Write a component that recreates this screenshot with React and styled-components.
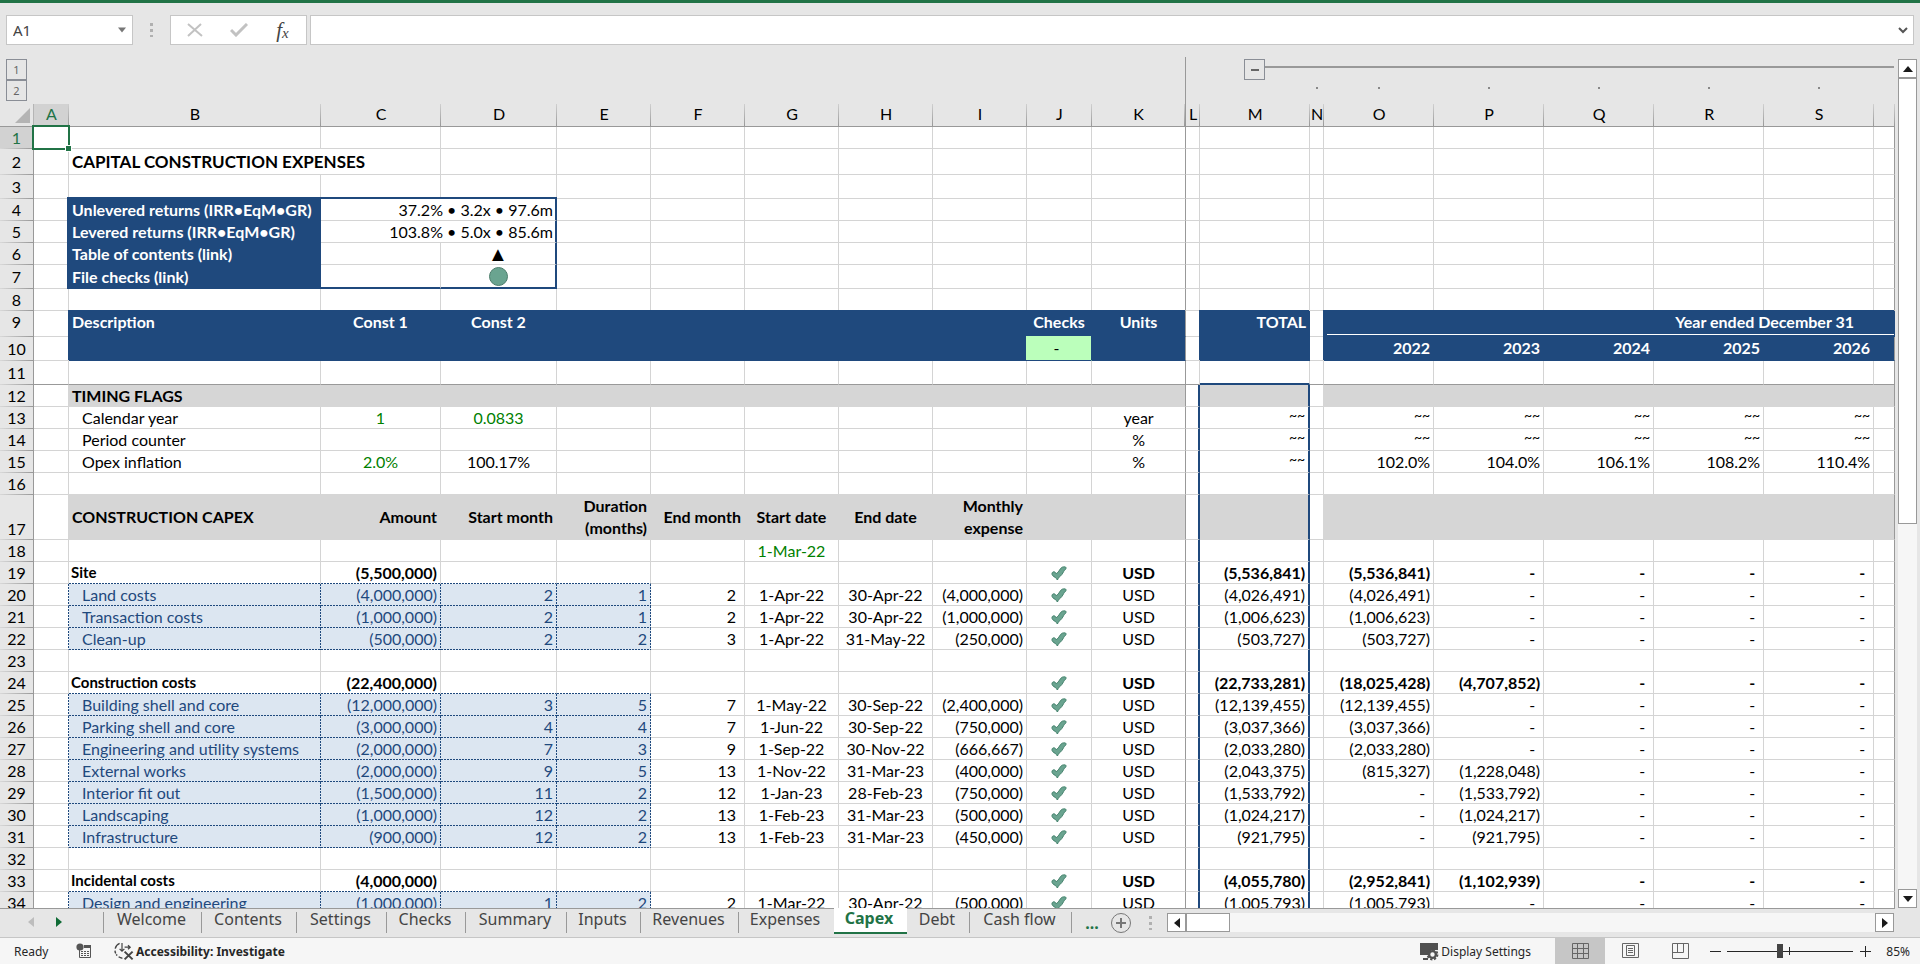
import { useState } from "react";
import { createGlobalStyle, css, styled } from "styled-components";

const NAVY = "#1f497d";
const GREEN = "#217346";
const GRID = "#d4d4d4";
const EDGE = "#999999";
const CHROME = "#e6e6e6";
const BAND = "#d6d6d6";
const UI_FONT = '"Noto Sans", "Open Sans", sans-serif';
const SHEET_FONT = 'Lato, "Open Sans", sans-serif';

const GlobalStyle = createGlobalStyle`
  *, *::before, *::after { box-sizing: border-box; }
  body { margin: 0; background: #ffffff; font-family: ${SHEET_FONT}; font-size: 16px; color: #000000; }
  button, input { font: inherit; color: inherit; margin: 0; }
  button { padding: 0; border: 0; background: none; cursor: pointer; }
  a { color: inherit; text-decoration: none; }
`;

/* ---------- data ---------- */

const COLUMNS = [
  { id: "A", width: 35 },
  { id: "B", width: 252 },
  { id: "C", width: 120 },
  { id: "D", width: 116 },
  { id: "E", width: 94 },
  { id: "F", width: 94 },
  { id: "G", width: 94 },
  { id: "H", width: 94 },
  { id: "I", width: 94 },
  { id: "J", width: 65 },
  { id: "K", width: 94 },
  { id: "L", width: 14 },
  { id: "M", width: 110 },
  { id: "N", width: 14 },
  { id: "O", width: 110 },
  { id: "P", width: 110 },
  { id: "Q", width: 110 },
  { id: "R", width: 110 },
  { id: "S", width: 110 },
  { id: "T" },
];

const YEARS = ["O", "P", "Q", "R", "S"];
const CENTERED = ["G", "H", "J", "K"];

const years = (values) => Object.fromEntries(YEARS.map((col, i) => [col, values[i] ?? "-"]));

const item = (n, name, amount, start, duration, endMonth, startDate, endDate, monthly, total, ...byYear) => ({
  n,
  kind: "item",
  cells: {
    B: name,
    C: amount,
    D: start,
    E: duration,
    F: endMonth,
    G: startDate,
    H: endDate,
    I: monthly,
    J: "tick",
    K: "USD",
    M: total,
    ...years(byYear),
  },
});

const group = (n, name, amount, total, ...byYear) => ({
  n,
  kind: "group",
  cells: { B: name, C: amount, J: "tick", K: "USD", M: total, ...years(byYear) },
});

const WAVES = ["~~", "~~", "~~", "~~", "~~"];

const ROWS = [
  { n: 1 },
  { n: 2, height: 26, cells: { B: "CAPITAL CONSTRUCTION EXPENSES" } },
  { n: 3, height: 24 },
  { n: 4, kind: "summary", cells: { B: "Unlevered returns (IRR•EqM•GR)", C: "37.2% • 3.2x • 97.6m" } },
  { n: 5, kind: "summary", cells: { B: "Levered returns (IRR•EqM•GR)", C: "103.8% • 5.0x • 85.6m" } },
  { n: 6, kind: "summary", cells: { B: "Table of contents (link)", D: "contents" } },
  { n: 7, height: 24, kind: "summary", cells: { B: "File checks (link)", D: "status" } },
  { n: 8 },
  {
    n: 9,
    height: 26,
    kind: "header",
    cells: { B: "Description", C: "Const 1", D: "Const 2", J: "Checks", K: "Units", M: "TOTAL" },
  },
  { n: 10, height: 24, kind: "header", cells: { J: "-", ...years(["2022", "2023", "2024", "2025", "2026"]) } },
  { n: 11, height: 24 },
  { n: 12, kind: "band", cells: { B: "TIMING FLAGS" } },
  { n: 13, cells: { B: "Calendar year", C: "1", D: "0.0833", K: "year", M: "~~", ...years(WAVES) } },
  { n: 14, cells: { B: "Period counter", K: "%", M: "~~", ...years(WAVES) } },
  {
    n: 15,
    cells: {
      B: "Opex inflation",
      C: "2.0%",
      D: "100.17%",
      K: "%",
      M: "~~",
      ...years(["102.0%", "104.0%", "106.1%", "108.2%", "110.4%"]),
    },
  },
  { n: 16 },
  {
    n: 17,
    height: 45,
    kind: "band",
    cells: {
      B: "CONSTRUCTION CAPEX",
      C: "Amount",
      D: "Start month",
      E: "Duration (months)",
      F: "End month",
      G: "Start date",
      H: "End date",
      I: "Monthly expense",
    },
  },
  { n: 18, cells: { G: "1-Mar-22" } },
  group(19, "Site", "(5,500,000)", "(5,536,841)", "(5,536,841)"),
  item(20, "Land costs", "(4,000,000)", 2, 1, 2, "1-Apr-22", "30-Apr-22", "(4,000,000)", "(4,026,491)", "(4,026,491)"),
  item(21, "Transaction costs", "(1,000,000)", 2, 1, 2, "1-Apr-22", "30-Apr-22", "(1,000,000)", "(1,006,623)", "(1,006,623)"),
  item(22, "Clean-up", "(500,000)", 2, 2, 3, "1-Apr-22", "31-May-22", "(250,000)", "(503,727)", "(503,727)"),
  { n: 23 },
  group(24, "Construction costs", "(22,400,000)", "(22,733,281)", "(18,025,428)", "(4,707,852)"),
  item(25, "Building shell and core", "(12,000,000)", 3, 5, 7, "1-May-22", "30-Sep-22", "(2,400,000)", "(12,139,455)", "(12,139,455)"),
  item(26, "Parking shell and core", "(3,000,000)", 4, 4, 7, "1-Jun-22", "30-Sep-22", "(750,000)", "(3,037,366)", "(3,037,366)"),
  item(27, "Engineering and utility systems", "(2,000,000)", 7, 3, 9, "1-Sep-22", "30-Nov-22", "(666,667)", "(2,033,280)", "(2,033,280)"),
  item(28, "External works", "(2,000,000)", 9, 5, 13, "1-Nov-22", "31-Mar-23", "(400,000)", "(2,043,375)", "(815,327)", "(1,228,048)"),
  item(29, "Interior fit out", "(1,500,000)", 11, 2, 12, "1-Jan-23", "28-Feb-23", "(750,000)", "(1,533,792)", "-", "(1,533,792)"),
  item(30, "Landscaping", "(1,000,000)", 12, 2, 13, "1-Feb-23", "31-Mar-23", "(500,000)", "(1,024,217)", "-", "(1,024,217)"),
  item(31, "Infrastructure", "(900,000)", 12, 2, 13, "1-Feb-23", "31-Mar-23", "(450,000)", "(921,795)", "-", "(921,795)"),
  { n: 32 },
  group(33, "Incidental costs", "(4,000,000)", "(4,055,780)", "(2,952,841)", "(1,102,939)"),
  item(34, "Design and engineering", "(1,000,000)", 1, 2, 2, "1-Mar-22", "30-Apr-22", "(500,000)", "(1,005,793)", "(1,005,793)"),
];

const TABS = [
  { name: "Welcome", width: 98 },
  { name: "Contents", width: 95 },
  { name: "Settings", width: 90 },
  { name: "Checks", width: 79 },
  { name: "Summary", width: 101 },
  { name: "Inputs", width: 74 },
  { name: "Revenues", width: 98 },
  { name: "Expenses", width: 95 },
  { name: "Capex", width: 73 },
  { name: "Debt", width: 63 },
  { name: "Cash flow", width: 102 },
];

/* ---------- shell ---------- */

const Window = styled.div`
  display: flex;
  flex-direction: column;
  height: 100vh;
  padding-bottom: 2px;
  border-top: 3px solid ${GREEN};
  overflow: hidden;
`;

const FormulaBar = styled.div`
  display: flex;
  flex: none;
  padding: 12px 6px 12px 6px;
  background: ${CHROME};
`;

const NameBox = styled.div`
  display: flex;
  width: 127px;
  height: 30px;
  border: 1px solid #c6c6c6;
  background: #ffffff;
  font-family: ${UI_FONT};
  font-size: 15px;
  color: #444444;
`;

const NameInput = styled.input`
  flex: 1;
  min-width: 0;
  padding: 0 6px;
  border: 0;
  background: none;
  outline: 0;
`;

const DropButton = styled.button`
  display: grid;
  place-items: center;
  width: 20px;
`;

const Grip = styled.span`
  align-self: center;
  width: 3px;
  height: 14px;
  margin: ${(p) => p.$margin};
  background: repeating-linear-gradient(#b0b0b0 0 3px, transparent 3px 6px);
`;

const FormulaActions = styled.div`
  display: flex;
  align-items: center;
  justify-content: center;
  gap: 4px;
  width: 137px;
  height: 30px;
  margin-right: 3px;
  border: 1px solid #c6c6c6;
  background: #ffffff;
`;

const ActionButton = styled.button`
  display: grid;
  place-items: center;
  width: 40px;
  height: 26px;
`;

const FxLabel = styled.span`
  font: italic 400 21px/22px "Liberation Serif", serif;
  color: #444444;

  sub {
    font-size: 15px;
    line-height: 1;
    vertical-align: -1px;
  }
`;

const FormulaField = styled.div`
  display: flex;
  flex: 1;
  height: 30px;
  border: 1px solid #c6c6c6;
  background: #ffffff;
`;

const Workspace = styled.div`
  display: grid;
  grid-template-columns: minmax(0, 1fr) 25px;
  flex: 1;
  min-height: 0;
  background: ${CHROME};
`;

const SheetView = styled.div`
  overflow: hidden;
  border-bottom: 1px solid ${EDGE};
`;

/* ---------- sheet ---------- */

const Sheet = styled.table`
  width: 100%;
  table-layout: fixed;
  border-collapse: separate;
  border-spacing: 0;
  line-height: 21px;

  th, td {
    padding: 0;
    font-weight: 400;
  }
`;

const Row = styled.tr`
  height: ${(p) => p.$height}px;
`;

const OutlineCell = styled.td`
  vertical-align: top;
  text-align: center;
  line-height: 0;
  border-right: 1px solid ${(p) => (p.$frozen ? EDGE : "transparent")};
`;

const LevelButtons = styled.div`
  display: flex;
  flex-direction: column;
  padding: 2px 0 0 6px;
`;

const OutlineButton = styled.button`
  display: block;
  flex: none;
  width: 21px;
  height: 21px;
  border: 1px solid #8a8e96;
  font-family: ${UI_FONT};
  font-size: 11px;
  line-height: 19px;
  color: #666666;
`;

const GroupSpan = styled.div`
  display: flex;
  align-items: flex-start;
  padding: 2px 0 0 44px;
`;

const GroupLine = styled.span`
  flex: 1;
  height: 2px;
  margin-top: 7px;
  background: ${EDGE};
`;

const Dot = styled.span`
  display: inline-block;
  width: 2px;
  height: 2px;
  margin-top: 6px;
  background: #888888;
`;

const CornerHead = styled.th`
  border-right: 1px solid #b5b5b5;
  border-bottom: 1px solid ${EDGE};
  vertical-align: bottom;
  line-height: 0;

  svg {
    display: block;
    margin: 0 3px 3px auto;
  }
`;

const ColumnHead = styled.th`
  border-bottom: 1px solid ${(p) => (p.$active ? GREEN : EDGE)};
  background: linear-gradient(#d0d0d0, #999999) right / 1px 100% no-repeat ${(p) => (p.$active ? "#d2d2d2" : CHROME)};
  color: ${(p) => (p.$active ? GREEN : "#000000")};
  line-height: 20px;
  vertical-align: top;
  white-space: nowrap;
  ${(p) => p.$frozen && css`border-right: 1px solid ${EDGE};`}
`;

const RowHead = styled.th`
  border-right: 1px solid ${(p) => (p.$active ? GREEN : EDGE)};
  background: linear-gradient(90deg, #d8d8d8, #999999) bottom / 100% 1px no-repeat
    ${(p) => (p.$active ? "#d2d2d2" : CHROME)};
  color: ${(p) => (p.$active ? GREEN : "#000000")};
  vertical-align: ${(p) => p.$valign};

  && {
    padding-bottom: 1px;
  }
`;

const fill = (color) => css`
  background: ${color};
  border-color: ${color};
  box-shadow: -1px -1px 0 ${color};
`;

const inputLines = css`
  border-color: transparent;
  background:
    repeating-linear-gradient(90deg, ${NAVY} 0 2px, transparent 2px 3px) left bottom / 100% 1px no-repeat border-box,
    repeating-linear-gradient(${NAVY} 0 2px, transparent 2px 3px) right top / 1px 100% no-repeat border-box,
    #dce6f1;
  color: ${NAVY};
`;

const Cell = styled.td`
  position: relative;
  border-right: 1px solid ${GRID};
  border-bottom: 1px solid ${GRID};
  background: #ffffff;
  white-space: nowrap;
  vertical-align: ${(p) => p.$valign || "middle"};
  text-align: ${(p) => p.$align || "right"};

  && {
    padding: 0 ${(p) => p.$padRight ?? 3}px 0 ${(p) => p.$padLeft ?? 3}px;
    font-weight: ${(p) => (p.$bold ? 700 : 400)};
  }

  ${(p) => p.$color && css`color: ${p.$color};`}
  ${(p) => p.$size && css`font-size: ${p.$size}px;`}
  ${(p) => p.$wrap && css`white-space: normal; line-height: 22px;`}
  ${(p) => p.$fill && fill(p.$fill)}
  ${(p) => p.$input && inputLines}
  ${(p) => p.$extra}
`;

const Selection = styled.span`
  position: absolute;
  z-index: 2;
  inset: -2px;
  border: 2px solid ${GREEN};

  &::after {
    content: "";
    position: absolute;
    right: -4px;
    bottom: -4px;
    width: 7px;
    height: 7px;
    border: 1px solid #ffffff;
    background: ${GREEN};
  }
`;

const Wave = styled.span`
  display: block;
  height: 21px;
  font-size: 14px;
  line-height: 15px;
`;

const YearTitle = styled.div`
  height: 24px;
  padding-right: 40px;
  border-bottom: 1px solid #ffffff;
`;

const ContentsLink = styled.a`
  display: block;
  font-size: 20px;
  line-height: 19px;
`;

const StatusLink = styled.a`
  display: block;
  width: 19px;
  height: 19px;
  margin: 0 auto;
  border: 1px solid #4c7d6b;
  border-radius: 50%;
  background: #6aa490;
`;

const TickSvg = styled.svg`
  display: block;
  margin: 1px auto 0;
`;

/* ---------- scrollbars ---------- */

const VerticalScroll = styled.div`
  display: flex;
  flex-direction: column;
  margin: 2px 3px 1px 3px;
  background: #f6f6f6;
`;

const ScrollButton = styled.button`
  display: grid;
  place-items: center;
  flex: none;
  width: 19px;
  height: 19px;
  border: 1px solid ${EDGE};
  background: #ffffff;
`;

const Track = styled.div`
  display: flex;
  flex: 1;
`;

const VerticalThumb = styled.div`
  width: 100%;
  height: 55%;
  border: 1px solid ${EDGE};
  background: #ffffff;
`;

const HorizontalScroll = styled.div`
  display: flex;
  flex: 1;
  height: 19px;
  margin: 4px 26px 0 0;
  background: #f6f6f6;
`;

const HorizontalThumb = styled.div`
  width: 44px;
  border: 1px solid ${EDGE};
  background: #ffffff;
`;

/* ---------- tabs and status ---------- */

const separator = css`
  background: linear-gradient(${EDGE}, ${EDGE}) right 3px / 1px 21px no-repeat;
`;

const TabBar = styled.div`
  display: flex;
  flex: none;
  height: 28px;
  background: ${CHROME};
  font-family: ${UI_FONT};
`;

const TabNav = styled.div`
  display: flex;
  width: 104px;
  padding: 5px 0 0 24px;
  ${separator}
`;

const NavButton = styled.button`
  display: grid;
  place-items: center;
  width: 14px;
  height: 16px;
  margin-right: 14px;
`;

const TabButton = styled.button`
  width: ${(p) => p.$width}px;
  height: 24px;
  padding: 0 3px 4px 0;
  line-height: 20px;
  color: #444444;
  ${(p) => !p.$plain && separator}
  ${(p) => p.$active && css`
    z-index: 1;
    height: 26px;
    margin-top: -1px;
    border-bottom: 2px solid ${GREEN};
    background: #ffffff;
    font-weight: 700;
    color: ${GREEN};
  `}
`;

const TabTools = styled.div`
  display: flex;
  align-items: center;
  height: 27px;
  padding-left: 12px;
`;

const MoreButton = styled.button`
  width: 16px;
  margin-right: 10px;
  font-weight: 700;
  line-height: 20px;
  color: ${GREEN};
`;

const RoundButton = styled.button`
  display: grid;
  place-items: center;
  width: 22px;
  height: 22px;
`;

const StatusBar = styled.footer`
  display: flex;
  align-items: stretch;
  flex: none;
  height: 27px;
  border-top: 1px solid #c6c6c6;
  background: #f6f6f6;
  font-family: ${UI_FONT};
  font-size: 12px;
  line-height: 27px;
  color: #262626;
`;

const Ready = styled.span`
  width: 76px;
  padding-left: 14px;
`;

const StatusButton = styled.button`
  display: flex;
  align-items: center;
  gap: 2px;
  margin: ${(p) => p.$margin || "0"};
  font-weight: ${(p) => (p.$bold ? 700 : 400)};
`;

const ViewButton = styled.button`
  display: grid;
  place-items: center;
  width: 50px;
  background: ${(p) => (p.$active ? "#c6c6c6" : "none")};
`;

const ZoomStep = styled.button`
  display: grid;
  place-items: center;
  width: 20px;
`;

const ZoomRange = styled.input`
  appearance: none;
  align-self: center;
  width: 126px;
  height: 16px;
  margin: 0 2px;
  background:
    linear-gradient(#262626, #262626) 62px 4px / 1px 8px no-repeat,
    linear-gradient(#262626, #262626) center / 100% 1px no-repeat;

  &::-webkit-slider-thumb {
    appearance: none;
    width: 6px;
    height: 14px;
    background: #444444;
  }
`;

const ZoomValue = styled.output`
  width: 45px;
  padding-right: 10px;
  text-align: right;
`;

/* ---------- icons ---------- */

const ARROWS = {
  up: "M5 2 L10 8 H0 Z",
  down: "M0 2 H10 L5 8 Z",
  left: "M8 0 V10 L2 5 Z",
  right: "M2 0 V10 L8 5 Z",
};

const Arrow = ({ dir, size = 10, color = "#1a1a1a" }) => (
  <svg width={size} height={size} viewBox="0 0 10 10" aria-hidden="true">
    <path d={ARROWS[dir]} fill={color} />
  </svg>
);

const Tick = () => (
  <TickSvg width="16" height="15" viewBox="0 0 16 15" role="img" aria-label="OK">
    <path
      d="M1 7.2 C1.6 5.4 4 5.2 5.2 7.6 C6.4 7 7.6 5.6 8.6 4 C9.6 2.4 10.6 1 12.4 0.9 C14.2 0.6 15.4 1.2 15 2.4 C14.6 3.8 13.4 4 12.6 5.6 C11.6 7.6 10.4 9.6 8.2 11 C7.4 11.6 7.2 13 6.4 14 C5.6 13 5.4 12 4.2 11.4 C2.4 10.4 0.6 9.2 1 7.2 Z"
      fill="#6aa490"
      stroke="#41806a"
      strokeWidth="1"
    />
  </TickSvg>
);

const MacroIcon = () => (
  <svg width="16" height="16" viewBox="0 0 16 16" aria-hidden="true">
    <path d="M3.5 6 V14.5 H14.5 V2.5 H8" fill="none" stroke="#555555" />
    <path d="M8 2 H15 V5 H8 Z" fill="#555555" />
    <circle cx="4" cy="4" r="3.6" fill="#555555" />
    <path d="M5 8.5 H13 M5 10.5 H13 M5 12.5 H13" stroke="#555555" strokeDasharray="2 1" />
  </svg>
);

const AccessibilityIcon = () => (
  <svg width="20" height="20" viewBox="0 0 20 20" fill="none" stroke="#444444" aria-hidden="true">
    <path d="M5.6 2.4 A7.6 7.6 0 0 0 1.2 7.6" strokeWidth="1.4" />
    <path d="M1 9.6 A7.6 7.6 0 0 0 3.2 14.6" strokeWidth="1.4" strokeDasharray="3 1" />
    <path d="M4.6 15.8 A7.6 7.6 0 0 0 8.4 17.2" strokeWidth="1.4" />
    <path d="M8 2 V10 M5.6 7.8 L8 10.2 L10.4 7.8" strokeWidth="1.2" />
    <path d="M10.6 6.2 H16 M14 4.2 L16.2 6.2 L14 8.2" strokeWidth="1.2" />
    <path d="M10.6 10.6 L18.6 18.4 M18.6 10.6 L10.6 18.4" strokeWidth="2" />
  </svg>
);

const DisplayIcon = () => (
  <svg width="20" height="19" viewBox="0 0 20 19" aria-hidden="true">
    <path d="M1 1 H19 V8 H12 L9 13 H1 Z M4 16 H9 V18 H4 Z" fill="#505050" />
    <circle cx="13.5" cy="12.5" r="3.4" fill="#f6f6f6" stroke="#505050" strokeWidth="2.4" />
    <circle cx="13.5" cy="12.5" r="5" fill="none" stroke="#505050" strokeWidth="1.8" strokeDasharray="2.2 1.7" />
  </svg>
);

const VIEW_ICONS = {
  Normal: "M0.5 0.5 H16.5 V15.5 H0.5 Z M0.5 5.5 H16.5 M0.5 10.5 H16.5 M5.5 0.5 V15.5 M11.5 0.5 V15.5",
  "Page Layout": "M0.5 0.5 H16.5 V14.5 H0.5 Z M4.5 2.5 H12.5 V12.5 H4.5 Z M6 5.5 H11 M6 7.5 H11 M6 9.5 H11",
  "Page Break Preview": "M0.5 0.5 H16.5 V15.5 H0.5 Z M5.5 0.5 V9.5 M11.5 0.5 V9.5 M0.5 9.5 H11.5",
};

const ViewIcon = ({ name }) => (
  <svg width="17" height="16" viewBox="0 0 17 16" fill="none" stroke="#666666" aria-hidden="true">
    <path d={VIEW_ICONS[name]} />
  </svg>
);

/* ---------- cell rules ---------- */

const isFilled = (id) => !["A", "L", "N"].includes(id);

const cellLook = (row, id, value) => {
  const look = {};
  const { n, kind } = row;

  if (id === "B") {
    look.$align = "left";
    look.$padLeft = 3;
    if (kind === "item" || (n >= 13 && n <= 15)) look.$padLeft = 13;
  }
  if (CENTERED.includes(id)) look.$align = "center";
  if (value === "-" || (id === "F" && kind === "item")) look.$padRight = 8;

  if (n === 2) {
    look.$bold = true;
    look.$size = 17;
  }

  if (n >= 13 && n <= 15 && (id === "C" || id === "D")) {
    look.$align = "center";
    if (value !== "100.17%") look.$color = "#008000";
  }
  if (n === 18) look.$color = "#008000";

  if (kind === "group") {
    look.$bold = true;
    if (id === "B") {
      look.$size = 15;
      look.$padLeft = 2;
    }
  }

  if (kind === "item" && ["B", "C", "D", "E"].includes(id)) look.$input = true;

  if (kind === "summary" && id === "B") {
    look.$bold = true;
    look.$color = "#ffffff";
    look.$fill = NAVY;
    look.$extra = css`box-shadow: -2px 0 0 ${NAVY}, 0 -2px 0 ${NAVY}, -2px -2px 0 ${NAVY};`;
  }
  if (kind === "summary" && (id === "C" || id === "D")) {
    const right = id === "D" || value;
    if (id === "D") look.$align = "center";
    look.$padRight = right && id === "C" ? 2 : 3;
    look.$extra = css`
      ${right && css`border-right: 2px solid ${NAVY};`}
      ${n === 4 && css`box-shadow: 0 -2px 0 ${NAVY};`}
      ${n === 7 && css`border-bottom: 2px solid ${NAVY};`}
    `;
  }

  if (kind === "header" && isFilled(id)) {
    look.$bold = true;
    look.$color = "#ffffff";
    look.$fill = NAVY;
    look.$valign = "top";
    if (id === "C" || id === "D") look.$align = "center";
    if (n === 10 && id === "J") {
      look.$bold = false;
      look.$color = "#000000";
      look.$extra = css`
        background: #bbffbb;
        border-right-color: #bbffbb;
        box-shadow: -1px -1px 0 #bbffbb;
      `;
    }
  }

  if (kind === "band" && isFilled(id)) {
    look.$bold = true;
    look.$fill = BAND;
    if (n === 12) look.$extra = css`box-shadow: -1px 0 0 ${BAND};`;
    if (n === 17) look.$wrap = true;
  }

  return look;
};

// pane edges and the outlined TOTAL column win over whatever the row kind asked for
const edgeLook = (row, id, nextKind) => css`
  ${row.n === 11 && css`border-bottom-color: ${EDGE};`}
  ${row.n === 11 && id === "M" && css`border-bottom: 2px solid ${NAVY};`}
  ${row.n >= 12 && (id === "L" || id === "M") && css`border-right: 2px solid ${NAVY};`}
  ${row.n >= 12 && id === "M" && css`box-shadow: none;`}
  ${nextKind === "item" && row.kind !== "item" && ["B", "C", "D", "E"].includes(id) && css`
    border-bottom-color: transparent;
    background:
      repeating-linear-gradient(90deg, ${NAVY} 0 2px, transparent 2px 3px) left bottom / 100% 1px no-repeat border-box,
      linear-gradient(#ffffff, #ffffff);
  `}
  ${row.kind === "item" && id === "A" && css`
    border-right-color: transparent;
    background:
      repeating-linear-gradient(${NAVY} 0 2px, transparent 2px 3px) right top / 1px 100% no-repeat border-box,
      #ffffff;
  `}
  ${(id === "K" || id === "T") && css`border-right-color: ${EDGE};`}
`;

const CellContent = ({ value }) => {
  if (value === "tick") return <Tick />;
  if (value === "~~") return <Wave>~~</Wave>;
  if (value === "contents") return <ContentsLink href="#contents">▲</ContentsLink>;
  if (value === "status") return <StatusLink href="#file-checks" aria-label="File checks" />;
  return value ?? null;
};

const SheetRow = ({ row, next }) => {
  const { n, height = 22, cells = {} } = row;
  const tds = [];
  let skip = 0;

  COLUMNS.forEach(({ id }) => {
    if (skip > 0) {
      skip -= 1;
      return;
    }
    const value = cells[id];
    const look = cellLook(row, id, value);
    let span = 1;
    if (n === 2 && id === "B") span = 2;
    if ((n === 4 || n === 5) && id === "C") span = 2;
    if (n === 9 && id === "O") span = 6;
    skip = span - 1;

    tds.push(
      <Cell
        key={id}
        colSpan={span}
        {...look}
        $padRight={span === 6 ? 0 : look.$padRight}
        $padLeft={id === "L" || id === "N" || id === "T" ? 0 : look.$padLeft}
        $extra={css`${look.$extra}${edgeLook(row, id, next?.kind)}`}
      >
        {span === 6 ? <YearTitle>Year ended December 31</YearTitle> : <CellContent value={value} />}
        {n === 1 && id === "A" && <Selection />}
      </Cell>
    );
  });

  return (
    <Row $height={height}>
      <RowHead scope="row" $active={n === 1} $valign={n === 17 ? "bottom" : n === 9 ? "top" : "middle"}>
        {n}
      </RowHead>
      {tds}
    </Row>
  );
};

const OutlineRows = () => (
  <>
    <Row $height={24}>
      <OutlineCell rowSpan={2}>
        <LevelButtons>
          <OutlineButton>1</OutlineButton>
          <OutlineButton>2</OutlineButton>
        </LevelButtons>
      </OutlineCell>
      <OutlineCell colSpan={11} $frozen />
      <OutlineCell />
      <OutlineCell colSpan={8}>
        <GroupSpan>
          <OutlineButton aria-label="Collapse group">
            <svg width="19" height="19" viewBox="0 0 19 19" aria-hidden="true">
              <path d="M6 10 H14" stroke="#666666" strokeWidth="2" />
            </svg>
          </OutlineButton>
          <GroupLine />
        </GroupSpan>
      </OutlineCell>
    </Row>
    <Row $height={23}>
      <OutlineCell colSpan={11} $frozen />
      <OutlineCell />
      <OutlineCell />
      {["N", ...YEARS].map((id) => (
        <OutlineCell key={id}>
          <Dot />
        </OutlineCell>
      ))}
      <OutlineCell />
    </Row>
  </>
);

const Spreadsheet = () => (
  <SheetView>
    <Sheet>
      <colgroup>
        <col width={34} />
        {COLUMNS.map(({ id, width }) => (
          <col key={id} width={width} />
        ))}
      </colgroup>
      <thead>
        <OutlineRows />
        <Row $height={23}>
          <CornerHead>
            <svg width="15" height="15" viewBox="0 0 15 15" aria-hidden="true">
              <path d="M15 0 V15 H0 Z" fill="#b4b4b4" />
            </svg>
          </CornerHead>
          {COLUMNS.map(({ id }) => (
            <ColumnHead key={id} scope="col" $active={id === "A"} $frozen={id === "K"}>
              {id === "T" ? "" : id}
            </ColumnHead>
          ))}
        </Row>
      </thead>
      <tbody>
        {ROWS.map((row, i) => (
          <SheetRow key={row.n} row={row} next={ROWS[i + 1]} />
        ))}
      </tbody>
    </Sheet>
  </SheetView>
);

const App = () => {
  const [activeTab, setActiveTab] = useState("Capex");
  const [zoom, setZoom] = useState(85);
  const [formula, setFormula] = useState("");
  const [cellName, setCellName] = useState("A1");
  const [view, setView] = useState("Normal");

  return (
    <Window>
      <GlobalStyle />
      <FormulaBar>
        <NameBox>
          <NameInput aria-label="Name box" value={cellName} onChange={(e) => setCellName(e.target.value)} />
          <DropButton aria-label="Show names">
            <Arrow dir="down" size={8} color="#777777" />
          </DropButton>
        </NameBox>
        <Grip $margin="0 17px" />
        <FormulaActions>
          <ActionButton aria-label="Cancel">
            <svg width="16" height="14" viewBox="0 0 16 14" fill="none" stroke="#c2c2c2" aria-hidden="true">
              <path d="M1 1 L15 13 M14 1 L1 13" strokeWidth="2" />
            </svg>
          </ActionButton>
          <ActionButton aria-label="Enter">
            <svg width="18" height="14" viewBox="0 0 18 14" fill="none" stroke="#c2c2c2" aria-hidden="true">
              <path d="M1 7 L6 12 L17 1" strokeWidth="3" />
            </svg>
          </ActionButton>
          <ActionButton aria-label="Insert function">
            <FxLabel>
              f<sub>x</sub>
            </FxLabel>
          </ActionButton>
        </FormulaActions>
        <FormulaField>
          <NameInput aria-label="Formula" value={formula} onChange={(e) => setFormula(e.target.value)} />
          <DropButton aria-label="Expand formula bar">
            <svg width="10" height="8" viewBox="0 0 10 8" fill="none" stroke="#555555" aria-hidden="true">
              <path d="M1 2 L5 6 L9 2" strokeWidth="2" />
            </svg>
          </DropButton>
        </FormulaField>
      </FormulaBar>

      <Workspace>
        <Spreadsheet />
        <VerticalScroll>
          <ScrollButton aria-label="Scroll up">
            <Arrow dir="up" />
          </ScrollButton>
          <Track>
            <VerticalThumb />
          </Track>
          <ScrollButton aria-label="Scroll down">
            <Arrow dir="down" />
          </ScrollButton>
        </VerticalScroll>
      </Workspace>

      <TabBar>
        <TabNav>
          <NavButton aria-label="Previous sheets">
            <Arrow dir="left" color="#bdbdbd" />
          </NavButton>
          <NavButton aria-label="Next sheets">
            <Arrow dir="right" color="#0f6b35" />
          </NavButton>
        </TabNav>
        {TABS.map(({ name, width }, i) => (
          <TabButton
            key={name}
            $width={width}
            $active={name === activeTab}
            $plain={TABS[i + 1]?.name === activeTab}
            onClick={() => setActiveTab(name)}
          >
            {name}
          </TabButton>
        ))}
        <TabTools>
          <MoreButton aria-label="More sheets">...</MoreButton>
          <RoundButton aria-label="New sheet">
            <svg width="22" height="22" viewBox="0 0 22 22" fill="none" stroke="#777777" aria-hidden="true">
              <circle cx="11" cy="11" r="9.5" />
              <path d="M11 6 V16 M6 11 H16" strokeWidth="2" />
            </svg>
          </RoundButton>
          <Grip $margin="0 15px 0 17px" />
        </TabTools>
        <HorizontalScroll>
          <ScrollButton aria-label="Scroll left">
            <Arrow dir="left" />
          </ScrollButton>
          <Track>
            <HorizontalThumb />
          </Track>
          <ScrollButton aria-label="Scroll right">
            <Arrow dir="right" />
          </ScrollButton>
        </HorizontalScroll>
      </TabBar>

      <StatusBar>
        <Ready>Ready</Ready>
        <StatusButton aria-label="Record macro">
          <MacroIcon />
        </StatusButton>
        <StatusButton $margin="0 0 0 22px" $bold>
          <AccessibilityIcon />
          Accessibility: Investigate
        </StatusButton>
        <StatusButton $margin="0 24px 0 auto">
          <DisplayIcon />
          Display Settings
        </StatusButton>
        {Object.keys(VIEW_ICONS).map((name) => (
          <ViewButton key={name} aria-label={name} $active={name === view} onClick={() => setView(name)}>
            <ViewIcon name={name} />
          </ViewButton>
        ))}
        <ZoomStep aria-label="Zoom out" onClick={() => setZoom(zoom - 10)}>
          <svg width="11" height="11" viewBox="0 0 11 11" stroke="#262626" aria-hidden="true">
            <path d="M0 5.5 H11" />
          </svg>
        </ZoomStep>
        <ZoomRange
          type="range"
          aria-label="Zoom"
          min="10"
          max="190"
          value={zoom}
          onChange={(e) => setZoom(Number(e.target.value))}
        />
        <ZoomStep aria-label="Zoom in" onClick={() => setZoom(zoom + 10)}>
          <svg width="11" height="11" viewBox="0 0 11 11" stroke="#262626" aria-hidden="true">
            <path d="M0 5.5 H11 M5.5 0 V11" />
          </svg>
        </ZoomStep>
        <ZoomValue>{zoom}%</ZoomValue>
      </StatusBar>
    </Window>
  );
};

export default App;
